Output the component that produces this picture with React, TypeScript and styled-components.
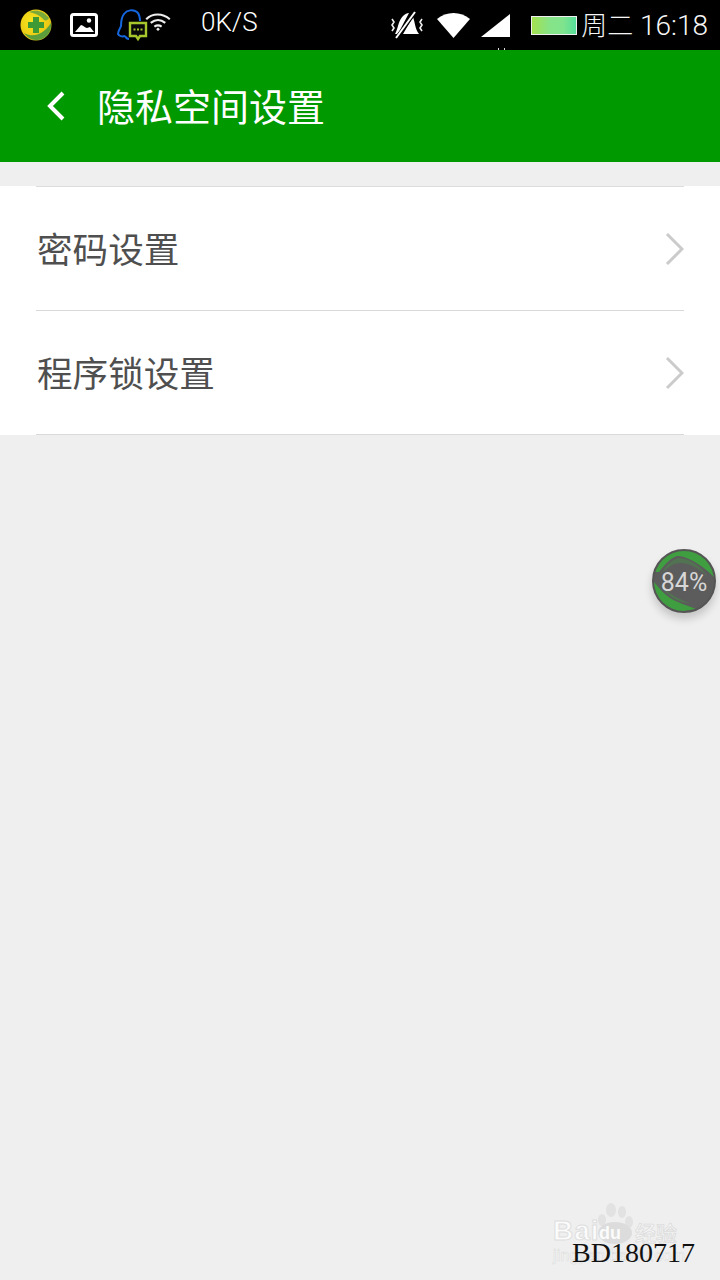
import { FC } from 'react';
import styled, { createGlobalStyle } from 'styled-components';

const CJK = `"Noto Sans CJK SC", "Roboto", sans-serif`;

const GlobalStyle = createGlobalStyle`
  html, body {
    margin: 0;
    padding: 0;
    background: #efefef;
  }
`;

const Screen = styled.div`
  position: relative;
  width: 720px;
  height: 1280px;
  overflow: hidden;
  background: #efefef;
  font-family: ${CJK};
`;

const StatusBar = styled.div`
  display: flex;
  align-items: center;
  justify-content: space-between;
  height: 50px;
  background: #000;
  color: #fff;
`;

const StatusGroup = styled.div`
  display: flex;
  align-items: center;
`;

const StatusIcon = styled.svg<{ $ml: number }>`
  display: block;
  flex: none;
  margin-left: ${({ $ml }) => $ml}px;
`;

const WifiIcon = styled(StatusIcon)`
  margin-top: -7px;
`;

const Speed = styled.span`
  margin: -6px 0 0 30px;
  font: 300 26px/30px Roboto, sans-serif;
  color: #fff;
`;

const Battery = styled.div`
  width: 44px;
  height: 17px;
  margin-left: 21px;
  border: 1px solid #eee;
  background: linear-gradient(90deg, #a4e04e 0%, #86e387 40%, #80e48d 70%, #56dd9a 100%);
`;

const Clock = styled.span`
  margin: 0 12px 0 4px;
  font: 300 28px/34px Roboto, ${CJK};
  color: #f6f6f6;
  white-space: nowrap;
`;

const ClockDay = styled.span`
  font: 300 26px/34px ${CJK};
`;

const EdgeSpecks = styled.div`
  position: absolute;
  left: 498px;
  top: 48px;
  width: 7px;
  height: 2px;
  border-left: 1px solid #ddd;
  border-right: 1px solid #ddd;
  box-sizing: border-box;
`;

const Header = styled.header`
  display: flex;
  align-items: center;
  height: 112px;
  padding: 0 0 3px 46px;
  box-sizing: border-box;
  background: #009900;
  color: #fff;
`;

const BackIcon = styled.svg`
  display: block;
  width: 20px;
  height: 32px;
  margin: 3px 31px 0 0;
`;

const Title = styled.h1`
  margin: 0;
  font: 400 38px/50px ${CJK};
`;

const List = styled.div`
  margin-top: 25px;
  background: #fff;
`;

const Row = styled.div<{ $top?: boolean }>`
  display: flex;
  align-items: center;
  justify-content: space-between;
  height: 123px;
  margin: ${({ $top }) => ($top ? '-1px' : '0')} 36px 0;
  border-bottom: 1px solid #d9d9d9;
  border-top: ${({ $top }) => ($top ? '1px solid #dcdcdc' : 'none')};
`;

const RowLabel = styled.span`
  padding: 0 0 2px 1px;
  font: 400 35.6px/48px ${CJK};
  color: #4f4f4f;
`;

const Chevron = styled.svg`
  display: block;
  width: 20px;
  height: 34px;
`;

const FloatBall = styled.div`
  position: absolute;
  left: 652px;
  top: 549px;
  display: flex;
  align-items: center;
  justify-content: center;
  width: 64px;
  height: 64px;
  border-radius: 50%;
  box-sizing: border-box;
  border: 2px solid #555;
  overflow: hidden;
  background: #5c5c5c;
  box-shadow: 0 6px 9px rgba(0, 0, 0, 0.18);
`;

const BallWave = styled.svg`
  position: absolute;
  inset: 0;
  width: 100%;
  height: 100%;
`;

const BallLabel = styled.span`
  position: relative;
  top: 2px;
  font: 400 25px/28px Roboto, sans-serif;
  color: #d6d6d6;
`;

const Watermark = styled.div`
  position: absolute;
  left: 552px;
  top: 1200px;
  width: 150px;
  height: 72px;
  color: #fff;
  white-space: nowrap;
`;

const Paw = styled.svg`
  position: absolute;
  left: 43px;
  top: 3px;
  width: 40px;
  height: 41px;
`;

const BaiWord = styled.span`
  position: absolute;
  left: 1px;
  top: 16px;
  font: 700 28px/30px "Liberation Sans", sans-serif;
  letter-spacing: 1px;
  color: #fbfbfb;
  -webkit-text-stroke: 1px #dedede;
`;

const DuWord = styled.span`
  position: absolute;
  left: 47px;
  top: 23px;
  font: 700 18px/20px "Liberation Sans", sans-serif;
  color: #fbfbfb;
`;

const JingyanWord = styled.span`
  position: absolute;
  left: 83px;
  top: 17px;
  font: 500 21px/30px ${CJK};
  color: #f8f8f8;
  -webkit-text-stroke: 0.8px #dcdcdc;
`;

const SiteWord = styled.span`
  position: absolute;
  left: 1px;
  top: 47px;
  font: 400 16px/18px "Liberation Sans", sans-serif;
  letter-spacing: 0.2px;
  color: #fbfbfb;
  -webkit-text-stroke: 0.6px #dcdcdc;
`;

const Stamp = styled.div`
  position: absolute;
  left: 572px;
  top: 1237px;
  font: 400 28px/32px "Liberation Serif", serif;
  color: #111;
`;

const RowChevron: FC = () => (
  <Chevron viewBox="0 0 20 34">
    <path d="M3 2l15 15L3 32" fill="none" stroke="#cbcbcb" strokeWidth="3" />
  </Chevron>
);

const items = ['密码设置', '程序锁设置'];

const App: FC = () => (
  <Screen>
    <GlobalStyle />
    <StatusBar>
      <StatusGroup>
        <StatusIcon $ml={20} width="32" height="32" viewBox="0 0 32 32">
          <defs>
            <radialGradient id="guard" cx="0.4" cy="0.4" r="0.7">
              <stop offset="0" stopColor="#f8e81e" />
              <stop offset="0.75" stopColor="#eac814" />
              <stop offset="1" stopColor="#a9b02a" />
            </radialGradient>
          </defs>
          <circle cx="16" cy="16" r="15.5" fill="url(#guard)" />
          <path d="M4 24c9 5 19 2 27-10 1 10-6 17-15 17-5 0-9-3-12-7z" fill="#5c9e3b" />
          <path d="M9 3c7-3 15-1 20 6-1 2-3 3-5 2C20 6 14 4 9 3z" fill="#7aa93a" />
          <path d="M13 8h6v5h5v6h-5v5h-6v-5H8v-6h5z" fill="#3f9a35" />
        </StatusIcon>
        <StatusIcon $ml={18} width="28" height="24" viewBox="0 0 28 24">
          <rect x="1.5" y="1.5" width="25" height="21" rx="2" fill="none" stroke="#fff" strokeWidth="3" />
          <path d="M5 19l6-7c2 0 4 3 6 3l3-1 4 5z" fill="#fff" />
          <circle cx="19" cy="7.5" r="2.2" fill="#fff" />
        </StatusIcon>
        <StatusIcon $ml={19} width="32" height="36" viewBox="0 0 32 36">
          <path
            d="M8 29c-3 1-6 0-7-2 0-3 2-5 3-8 0-3 0-8 3-12 3-4 9-5 13-2 3 3 3 6 3 9"
            fill="none"
            stroke="#1467e0"
            strokeWidth="2"
          />
          <path d="M8 29c1 2 2 3 4 3" fill="none" stroke="#1467e0" strokeWidth="2" />
          <path d="M13 16h16v13h-6l-2 3-2-3h-6z" fill="#0a0a0a" stroke="#a6c62c" strokeWidth="2.4" />
          <path d="M16.5 22.5h2M20 22.5h2M23.5 22.5h2" stroke="#a6c62c" strokeWidth="2" />
        </StatusIcon>
        <WifiIcon $ml={-4} width="26" height="20" viewBox="0 0 28 22">
          <path d="M1 8c7-7 18-7 26 0M6 12c5-4 11-4 16 0M10 16c3-2 5-2 8 0" fill="none" stroke="#eee" strokeWidth="2.4" />
          <path d="M12 19l2-2 2 2-2 2z" fill="#eee" />
        </WifiIcon>
        <Speed>0K/S</Speed>
      </StatusGroup>
      <StatusGroup>
        <StatusIcon $ml={0} width="32" height="28" viewBox="0 0 32 28">
          <path d="M12 5c2-2 4-3 6-3l-9 17-3 4H4c3-5 3-13 8-18zM22 6c2 5 2 12 6 17H12z" fill="#fff" />
          <path d="M5 28L25 0" stroke="#000" strokeWidth="3.5" />
          <path d="M5 27L24 1" stroke="#fff" strokeWidth="2" />
          <path d="M1 8l2 3-2 3 2 3-2 3M31 8l-2 3 2 3-2 3 2 3" fill="none" stroke="#eee" strokeWidth="1.6" />
        </StatusIcon>
        <StatusIcon $ml={14} width="33" height="25" viewBox="0 0 33 25">
          <path d="M0 6c9-8 24-8 33 0L16.5 25z" fill="#fff" />
        </StatusIcon>
        <StatusIcon $ml={11} width="29" height="23" viewBox="0 0 29 23">
          <path d="M29 0v23H0z" fill="#fff" />
        </StatusIcon>
        <Battery />
        <Clock>
          <ClockDay>周二</ClockDay> 16:18
        </Clock>
      </StatusGroup>
    </StatusBar>
    <EdgeSpecks />

    <Header>
      <BackIcon viewBox="0 0 20 32">
        <path d="M17 3L4 16l13 13" fill="none" stroke="#fff" strokeWidth="4" />
      </BackIcon>
      <Title>隐私空间设置</Title>
    </Header>

    <List>
      {items.map((label, index) => (
        <Row key={label} $top={index === 0}>
          <RowLabel>{label}</RowLabel>
          <RowChevron />
        </Row>
      ))}
    </List>

    <FloatBall>
      <BallWave viewBox="0 0 60 60">
        <path d="M5 21C12 12 17 7 23 5 32 5 46 12 60 26V0H0v21z" fill="#3f9e3f" />
        <path d="M0 31C6 38 10 43 16 47 24 52 32 54 42 58L30 60H0z" fill="#3f9e3f" />
        <path d="M8 22C14 16 20 12 26 12 36 12 46 18 54 26 46 14 34 7 24 7 18 9 12 14 8 22z" fill="#3f9e3f" opacity="0.35" />
        <path d="M6 34C14 42 24 48 36 52 26 52 16 48 6 34z" fill="#3f9e3f" opacity="0.35" />
      </BallWave>
      <BallLabel>84%</BallLabel>
    </FloatBall>

    <Watermark>
      <Paw viewBox="0 0 40 41">
        <ellipse cx="7" cy="17" rx="4" ry="6" fill="#e2e2e2" />
        <ellipse cx="16" cy="7" rx="5" ry="7" fill="#e2e2e2" />
        <ellipse cx="27" cy="9" rx="4" ry="6" fill="#e2e2e2" />
        <ellipse cx="34" cy="19" rx="4" ry="6" fill="#e2e2e2" />
        <ellipse cx="20" cy="30" rx="17" ry="11" fill="#dcdcdc" />
      </Paw>
      <BaiWord>Bai</BaiWord>
      <DuWord>du</DuWord>
      <JingyanWord>经验</JingyanWord>
      <SiteWord>jingyan.baidu.com</SiteWord>
    </Watermark>
    <Stamp>BD180717</Stamp>
  </Screen>
);

export default App;
